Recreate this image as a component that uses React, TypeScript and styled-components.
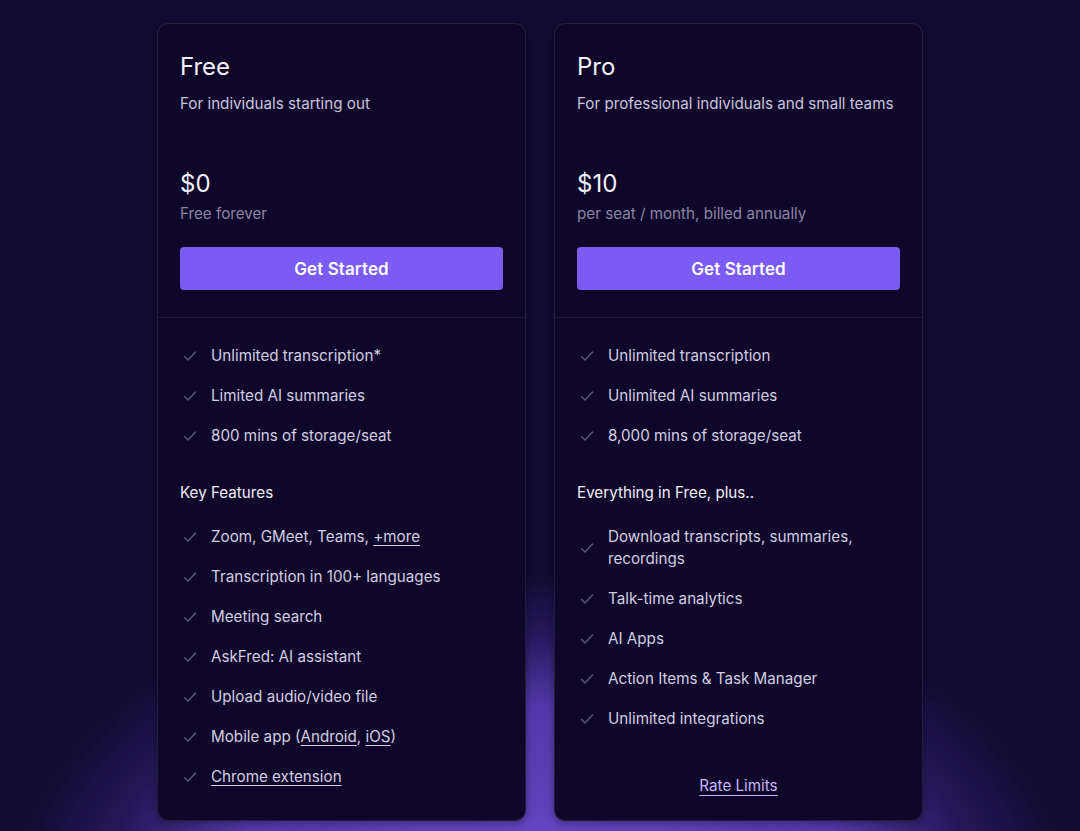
import React from "react";
import styled, { createGlobalStyle } from "styled-components";

const GlobalStyle = createGlobalStyle`
  html, body { margin: 0; padding: 0; }
  body {
    background: #120b33;
    font-family: Inter, "Noto Sans", sans-serif;
    -webkit-font-smoothing: antialiased;
  }
  #root { min-height: 100vh; }
`;

const Page = styled.div`
  min-height: 831px;
  box-sizing: border-box;
  display: flex;
  justify-content: center;
  align-items: flex-start;
  gap: 28px;
  padding-top: 23px;
  background:
    radial-gradient(ellipse 530px 330px at 50% 905px, rgba(104, 76, 205, 1) 0%, rgba(88, 62, 182, 0.9) 60%, rgba(60, 40, 140, 0.45) 82%, rgba(18, 11, 51, 0) 100%),
    #120b33;
  overflow: hidden;
`;

const Card = styled.div`
  width: 369px;
  height: 798px;
  box-sizing: border-box;
  display: flex;
  flex-direction: column;
  background: #0e072a;
  border: 1px solid rgba(255, 255, 255, 0.09);
  border-radius: 11px;
  box-shadow: 0 2px 8px rgba(0, 0, 0, 0.35);
`;

const Header = styled.div`
  padding: 27px 22px 27px 22px;
  border-bottom: 1px solid rgba(255, 255, 255, 0.08);
  display: flex;
  flex-direction: column;
`;

const Title = styled.div`
  font-size: 24px;
  line-height: 32px;
  color: #f3f1fb;
`;

const Subtitle = styled.div`
  margin-top: 9px;
  font-size: 15.2px;
  line-height: 24px;
  color: #c8c3dc;
`;

const Price = styled.div`
  margin-top: 52px;
  font-size: 24px;
  line-height: 32px;
  color: #f3f1fb;
`;

const PriceNote = styled.div`
  margin-top: 2px;
  font-size: 15.2px;
  line-height: 24px;
  color: #8a85a3;
`;

const Button = styled.button`
  margin-top: 21px;
  height: 43px;
  width: 100%;
  border: none;
  border-radius: 4px;
  background: #7a5cf5;
  color: #fbfaff;
  font-family: Inter, sans-serif;
  font-size: 17px;
  font-weight: 600;
  letter-spacing: 0.1px;
  cursor: pointer;
`;

const Body = styled.div`
  flex: 1;
  display: flex;
  flex-direction: column;
  padding: 18px 22px 23px 22px;
`;

const List = styled.ul`
  list-style: none;
  margin: 0;
  padding: 0;
`;

const Item = styled.li`
  display: flex;
  align-items: center;
  gap: 11px;
  padding: 9px 0;
  font-size: 15.2px;
  line-height: 22px;
  color: #d2cee2;
`;

const CheckBox = styled.span`
  flex: none;
  width: 20px;
  height: 20px;
  display: flex;
  align-items: center;
  justify-content: center;
`;

const SectionLabel = styled.div`
  margin-top: 25px;
  margin-bottom: 12px;
  font-size: 15.2px;
  line-height: 24px;
  color: #f1eff9;
`;

const Link = styled.a`
  color: #d2cee2;
  text-decoration: underline;
  text-underline-offset: 3px;
  text-decoration-thickness: 1px;
`;

const Footer = styled.div`
  margin-top: auto;
  text-align: center;
`;

const RateLink = styled.a`
  font-size: 15.2px;
  line-height: 22px;
  color: #c4b5f8;
  text-decoration: underline;
  text-underline-offset: 4px;
  text-decoration-thickness: 1px;
`;

const Check = () => (
  <CheckBox>
    <svg width="14" height="14" viewBox="0 0 14 14" fill="none">
      <path d="M1.5 7.5 L5 11 L12.5 3" stroke="#5f5a7d" strokeWidth="1.3" strokeLinecap="round" strokeLinejoin="round" />
    </svg>
  </CheckBox>
);

const Feature = ({ children }: { children: React.ReactNode }) => (
  <Item>
    <Check />
    <span>{children}</span>
  </Item>
);

export default function App() {
  return (
    <>
      <GlobalStyle />
      <Page>
        <Card>
          <Header>
            <Title>Free</Title>
            <Subtitle>For individuals starting out</Subtitle>
            <Price>$0</Price>
            <PriceNote>Free forever</PriceNote>
            <Button>Get Started</Button>
          </Header>
          <Body>
            <List>
              <Feature>Unlimited transcription*</Feature>
              <Feature>Limited AI summaries</Feature>
              <Feature>800 mins of storage/seat</Feature>
            </List>
            <SectionLabel>Key Features</SectionLabel>
            <List>
              <Feature>
                Zoom, GMeet, Teams, <Link href="#">+more</Link>
              </Feature>
              <Feature>Transcription in 100+ languages</Feature>
              <Feature>Meeting search</Feature>
              <Feature>AskFred: AI assistant</Feature>
              <Feature>Upload audio/video file</Feature>
              <Feature>
                Mobile app (<Link href="#">Android</Link>, <Link href="#">iOS</Link>)
              </Feature>
              <Feature>
                <Link href="#">Chrome extension</Link>
              </Feature>
            </List>
          </Body>
        </Card>
        <Card>
          <Header>
            <Title>Pro</Title>
            <Subtitle>For professional individuals and small teams</Subtitle>
            <Price>$10</Price>
            <PriceNote>per seat / month, billed annually</PriceNote>
            <Button>Get Started</Button>
          </Header>
          <Body>
            <List>
              <Feature>Unlimited transcription</Feature>
              <Feature>Unlimited AI summaries</Feature>
              <Feature>8,000 mins of storage/seat</Feature>
            </List>
            <SectionLabel>Everything in Free, plus..</SectionLabel>
            <List>
              <Feature>Download transcripts, summaries, recordings</Feature>
              <Feature>Talk-time analytics</Feature>
              <Feature>AI Apps</Feature>
              <Feature>Action Items &amp; Task Manager</Feature>
              <Feature>Unlimited integrations</Feature>
            </List>
            <Footer>
              <RateLink href="#">Rate Limits</RateLink>
            </Footer>
          </Body>
        </Card>
      </Page>
    </>
  );
}
